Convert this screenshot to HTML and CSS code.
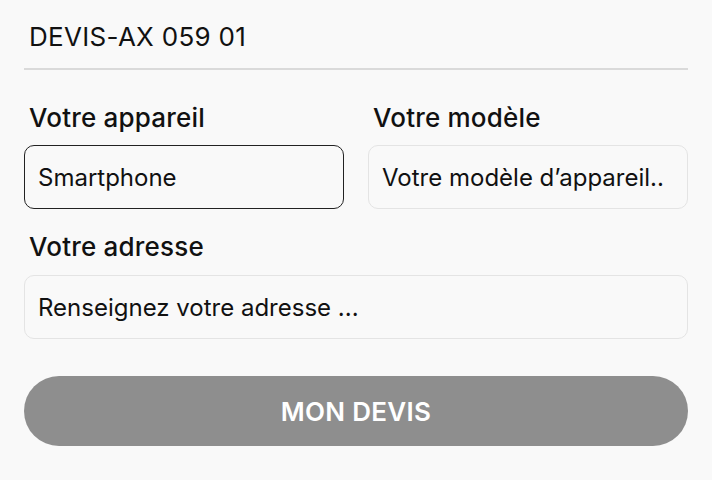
FILE: index.html
```html
<!DOCTYPE html>
<html lang="fr">
<head>
<meta charset="utf-8">
<link rel="stylesheet" href="styles.css">
</head>
<body>
<div class="page">
  <div class="header">DEVIS-AX 059 01</div>
  <div class="divider"></div>
  <div class="row">
    <div class="field">
      <div class="label">Votre appareil</div>
      <div class="input active">Smartphone</div>
    </div>
    <div class="field">
      <div class="label">Votre modèle</div>
      <div class="input">Votre modèle d’appareil..</div>
    </div>
  </div>
  <div class="field full">
    <div class="label">Votre adresse</div>
    <div class="input">Renseignez votre adresse ...</div>
  </div>
  <button class="btn">MON DEVIS</button>
</div>
</body>
</html>
```
FILE: styles.css
```css
html, body {
  margin: 0;
  padding: 0;
  background: #f9f9f9;
}
body {
  font-family: Inter, "Noto Sans", sans-serif;
  color: #111;
}
.page {
  width: 664px;
  padding: 0 24px;
  display: flex;
  flex-direction: column;
}
.header {
  font-size: 26px;
  font-weight: 400;
  letter-spacing: 0.3px;
  padding: 22px 0 0 5px;
  height: 46px;
  line-height: 30px;
  box-sizing: border-box;
}
.divider {
  height: 2px;
  background: #dadada;
  margin-top: 22px;
}
.row {
  display: grid;
  grid-template-columns: 320px 320px;
  column-gap: 24px;
  margin-top: 33px;
}
.field {
  display: flex;
  flex-direction: column;
}
.field.full {
  margin-top: 23px;
}
.label {
  font-size: 26px;
  font-weight: 500;
  letter-spacing: 0.2px;
  line-height: 30px;
  padding-left: 5px;
  margin-bottom: 12px;
}
.full .label {
  margin-bottom: 13px;
}
.input {
  height: 64px;
  box-sizing: border-box;
  border: 1px solid #e4e4e4;
  border-radius: 10px;
  background: #f9f9f9;
  display: flex;
  align-items: center;
  padding-left: 13px;
  font-size: 24px;
  color: #111;
}
.input.active {
  border-color: #222;
}
.btn {
  margin-top: 37px;
  height: 70px;
  border: none;
  border-radius: 35px;
  background: #8e8e8e;
  color: #fff;
  font-family: Inter, "Noto Sans", sans-serif;
  font-size: 26px;
  font-weight: 600;
  letter-spacing: 0.3px;
}
```
